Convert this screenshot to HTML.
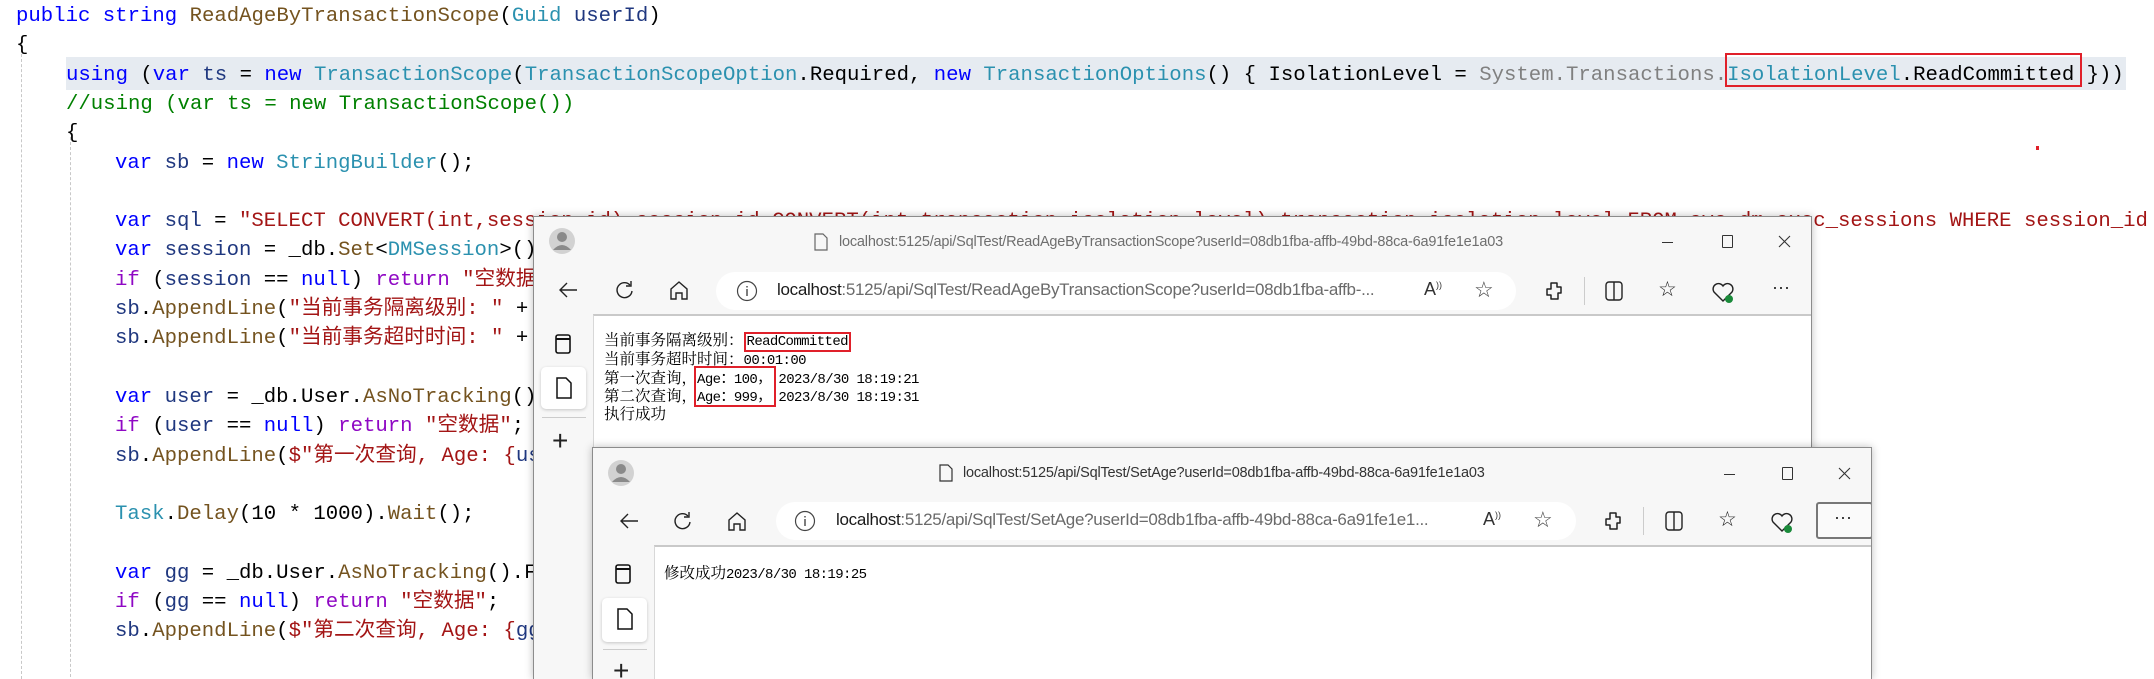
<!DOCTYPE html>
<html><head><meta charset="utf-8"><style>
*{margin:0;padding:0;box-sizing:border-box}
html,body{width:2154px;height:679px;overflow:hidden;background:#fff;position:relative}
.code{position:absolute;left:0;top:0;font-family:"Liberation Mono","Noto Sans CJK SC",monospace;font-size:20.66px;color:#000;white-space:pre}
.ln{position:absolute;height:29.3px;line-height:29.3px}
.k{color:#0000ff}.t{color:#2b91af}.s{color:#a31515}.c{color:#008000}.m{color:#74531f}.g{color:#808080}.v{color:#1f377f}.p{color:#8f08c4}
.guide{position:absolute;width:0;border-left:1px dashed #c8c8c8}
.win{position:absolute;background:#f7f7f7;border:1px solid #8c8c8c;border-bottom:none;box-shadow:0 0 8px rgba(0,0,0,.25);overflow:hidden;font-family:"Liberation Sans",sans-serif}
.abs{position:absolute}
.title{position:absolute;font-size:14.5px;color:#6e6e6e;white-space:nowrap;letter-spacing:-0.2px}
.pill{position:absolute;background:#fff;border-radius:20px}
.url{position:absolute;font-size:17px;color:#6a6a6a;white-space:nowrap;letter-spacing:-0.3px}
.url b{font-weight:normal;color:#1a1a1a}
.content{position:absolute;background:#fff;border-top:2px solid #c9c9c9;border-left:1px solid #d8d8d8}
.txt{position:absolute;font-family:"Noto Serif CJK SC","Noto Sans CJK SC",serif;font-size:15.5px;white-space:nowrap;color:#000;line-height:18.5px}
.a{font-family:"Liberation Mono",monospace;font-size:14px;letter-spacing:-0.6px}
.rb{border:2px solid #e0202a;padding:0 1px}
</style></head><body>

<div class="guide" style="left:21px;top:44px;height:640px"></div>
<div class="guide" style="left:70px;top:132px;height:560px"></div>

<div class="abs" style="left:66px;top:57px;width:2060px;height:33px;background:#e6ebf1"></div>
<div class="abs" style="left:1725px;top:53px;width:357px;height:34px;border:2px solid #e0202a"></div>
<div class="abs" style="left:2036px;top:146px;width:3px;height:4px;background:#e0202a"></div>

<div class="code">
<div class="ln" style="left:16px;top:2px"><span class="k">public</span> <span class="k">string</span> <span class="m">ReadAgeByTransactionScope</span>(<span class="t">Guid</span> <span class="v">userId</span>)</div>
<div class="ln" style="left:16px;top:31.3px">{</div>
<div class="ln" style="left:66px;top:60.6px"><span class="k">using</span> (<span class="k">var</span> <span class="v">ts</span> = <span class="k">new</span> <span class="t">TransactionScope</span>(<span class="t">TransactionScopeOption</span>.Required, <span class="k">new</span> <span class="t">TransactionOptions</span>() { IsolationLevel = <span class="g">System.Transactions.</span><span class="t">IsolationLevel</span>.ReadCommitted }))</div>
<div class="ln c" style="left:66px;top:89.9px">//using (var ts = new TransactionScope())</div>
<div class="ln" style="left:66px;top:119.2px">{</div>
<div class="ln" style="left:115px;top:148.5px"><span class="k">var</span> <span class="v">sb</span> = <span class="k">new</span> <span class="t">StringBuilder</span>();</div>
<div class="ln" style="left:115px;top:207.1px"><span class="k">var</span> <span class="v">sql</span> = <span class="s">"SELECT CONVERT(int,session_id) session_id,CONVERT(int,transaction_isolation_level) transaction_isolation_level FROM sys.dm_exec_sessions WHERE session_id</span></div>
<div class="ln" style="left:115px;top:236.4px"><span class="k">var</span> <span class="v">session</span> = _db.<span class="m">Set</span>&lt;<span class="t">DMSession</span>&gt;().FromSqlRaw(sql).FirstOrDefault();</div>
<div class="ln" style="left:115px;top:265.7px"><span class="p">if</span> (<span class="v">session</span> == <span class="k">null</span>) <span class="p">return</span> <span class="s">"空数据";</span></div>
<div class="ln" style="left:115px;top:295px"><span class="v">sb</span>.<span class="m">AppendLine</span>(<span class="s">"当前事务隔离级别: "</span> + session);</div>
<div class="ln" style="left:115px;top:324.3px"><span class="v">sb</span>.<span class="m">AppendLine</span>(<span class="s">"当前事务超时时间: "</span> + session);</div>
<div class="ln" style="left:115px;top:382.9px"><span class="k">var</span> <span class="v">user</span> = _db.User.<span class="m">AsNoTracking</span>().FirstOrDefault();</div>
<div class="ln" style="left:115px;top:412.2px"><span class="p">if</span> (<span class="v">user</span> == <span class="k">null</span>) <span class="p">return</span> <span class="s">"空数据"</span>;</div>
<div class="ln" style="left:115px;top:441.5px"><span class="v">sb</span>.<span class="m">AppendLine</span>(<span class="s">$"第一次查询, Age: {</span><span class="v">user</span>.Age}");</div>
<div class="ln" style="left:115px;top:500.1px"><span class="t">Task</span>.<span class="m">Delay</span>(10 * 1000).<span class="m">Wait</span>();</div>
<div class="ln" style="left:115px;top:558.7px"><span class="k">var</span> <span class="v">gg</span> = _db.User.<span class="m">AsNoTracking</span>().FirstOrDefault();</div>
<div class="ln" style="left:115px;top:588px"><span class="p">if</span> (<span class="v">gg</span> == <span class="k">null</span>) <span class="p">return</span> <span class="s">"空数据"</span>;</div>
<div class="ln" style="left:115px;top:617.3px"><span class="v">sb</span>.<span class="m">AppendLine</span>(<span class="s">$"第二次查询, Age: {</span><span class="v">gg</span>.Age}");</div>
</div>

<!-- Browser 1 -->
<div class="win" style="left:533px;top:216px;width:1279px;height:463px">
  <svg class="abs" style="left:14px;top:10px" width="28" height="28"><circle cx="14" cy="14" r="13" fill="#d2d2d2"/><circle cx="14" cy="10" r="5" fill="#8a8a8a"/><path d="M5 23 q9-10 18 0" fill="#8a8a8a"/></svg>
  <svg class="abs" style="left:280px;top:16px" width="14" height="18"><path d="M1 1h8l4 4v12H1z" fill="none" stroke="#666" stroke-width="1.2"/></svg>
  <div class="title" style="left:305px;top:17px">localhost:5125/api/SqlTest/ReadAgeByTransactionScope?userId=08db1fba-affb-49bd-88ca-6a91fe1e1a03</div>
  <div class="abs" style="left:1128px;top:25px;width:11px;height:1px;background:#333"></div>
  <div class="abs" style="left:1188px;top:18px;width:11px;height:13px;border:1px solid #333;border-radius:1px"></div>
  <svg class="abs" style="left:1244px;top:18px" width="13" height="13"><path d="M1 1L12 12M12 1L1 12" stroke="#333" stroke-width="1.1"/></svg>
  <svg class="abs" style="left:24px;top:64px" width="20" height="18"><path d="M19 9H2M9 2L2 9l7 7" fill="none" stroke="#222" stroke-width="1.4"/></svg>
  <svg class="abs" style="left:81px;top:63px" width="20" height="22"><path d="M15 5A7.5 7.5 0 1 0 17 11" fill="none" stroke="#222" stroke-width="1.4"/><path d="M11 6h5V1" fill="none" stroke="#222" stroke-width="1.4"/></svg>
  <svg class="abs" style="left:135px;top:63px" width="20" height="20"><path d="M2 9L10 2l8 7v10h-5v-6H7v6H2z" fill="none" stroke="#222" stroke-width="1.4"/></svg>
  <div class="pill" style="left:182px;top:55px;width:800px;height:38px"></div>
  <svg class="abs" style="left:202px;top:63px" width="22" height="22"><circle cx="11" cy="11" r="9.5" fill="none" stroke="#444" stroke-width="1.2"/><path d="M11 9v7M11 6v1.5" stroke="#444" stroke-width="1.4"/></svg>
  <div class="url" style="left:243px;top:63px"><b>localhost</b>:5125/api/SqlTest/ReadAgeByTransactionScope?userId=08db1fba-affb-...</div>
  <div class="abs" style="left:890px;top:62px;font-size:18px;color:#333">A<sup style="font-size:9px">))</sup></div>
  <div class="abs" style="left:940px;top:60px;font-size:22px;color:#444">☆</div>
  <svg class="abs" style="left:1009px;top:63px" width="22" height="22"><path d="M8 3h6v4h4v6h-3v6H8v-4H4V9h4z" fill="none" stroke="#222" stroke-width="1.5" stroke-linejoin="round"/></svg>
  <div class="abs" style="left:1050px;top:60px;width:1px;height:28px;background:#ccc"></div>
  <svg class="abs" style="left:1070px;top:63px" width="20" height="22"><rect x="2" y="2" width="16" height="18" rx="3" fill="none" stroke="#222" stroke-width="1.4"/><path d="M10 2v18" stroke="#222" stroke-width="1.4"/></svg>
  <div class="abs" style="left:1124px;top:60px;font-size:21px;color:#222">☆</div>
  <svg class="abs" style="left:1177px;top:63px" width="24" height="24"><path d="M12 21L3 12a5 5 0 0 1 9-6a5 5 0 0 1 9 6z" fill="none" stroke="#222" stroke-width="1.4"/><circle cx="18" cy="19" r="4" fill="#1a8a3a"/></svg>
  <div class="abs" style="left:1238px;top:60px;font-size:18px;color:#222">···</div>
  <div class="content" style="left:59px;top:97px;width:1230px;height:380px"></div>
  <svg class="abs" style="left:20px;top:116px" width="18" height="22"><rect x="2" y="2" width="14" height="18" rx="2" fill="none" stroke="#111" stroke-width="1.6"/><path d="M2 6h14" stroke="#111" stroke-width="2"/></svg>
  <div class="abs" style="left:7px;top:150px;width:45px;height:42px;background:#fff;border-radius:5px;box-shadow:0 1px 3px rgba(0,0,0,.2)"></div>
  <svg class="abs" style="left:22px;top:160px" width="16" height="22"><path d="M1 1h9l5 5v15H1z" fill="none" stroke="#111" stroke-width="1.5"/></svg>
  <div class="abs" style="left:8px;top:200px;width:44px;height:1px;background:#ccc"></div>
  <div class="abs" style="left:18px;top:208px;font-size:28px;color:#222;font-weight:300">+</div>
  <div class="txt" style="left:70px;top:113px">当前事务隔离级别：<span class="a rb">ReadCommitted</span></div>
  <div class="txt" style="left:70px;top:132px">当前事务超时时间：<span class="a">00:01:00</span></div>
  <div class="txt" style="left:70px;top:151px">第一次查询，<span class="a">Age：100，</span><span class="a"> 2023/8/30 18:19:21</span></div>
  <div class="txt" style="left:70px;top:169px">第二次查询，<span class="a">Age：999，</span><span class="a"> 2023/8/30 18:19:31</span></div>
  <div class="txt" style="left:70px;top:187px">执行成功</div>
  <div class="abs" style="left:160px;top:149px;width:82px;height:41px;border:2px solid #e0202a"></div>
</div>

<!-- Browser 2 -->
<div class="win" style="left:592px;top:447px;width:1280px;height:232px">
  <svg class="abs" style="left:14px;top:11px" width="28" height="28"><circle cx="14" cy="14" r="13" fill="#d2d2d2"/><circle cx="14" cy="10" r="5" fill="#8a8a8a"/><path d="M5 23 q9-10 18 0" fill="#8a8a8a"/></svg>
  <svg class="abs" style="left:346px;top:16px" width="14" height="18"><path d="M1 1h8l4 4v12H1z" fill="none" stroke="#333" stroke-width="1.2"/></svg>
  <div class="title" style="left:370px;top:17px;color:#333">localhost:5125/api/SqlTest/SetAge?userId=08db1fba-affb-49bd-88ca-6a91fe1e1a03</div>
  <div class="abs" style="left:1131px;top:26px;width:11px;height:1px;background:#333"></div>
  <div class="abs" style="left:1189px;top:19px;width:11px;height:13px;border:1px solid #333;border-radius:1px"></div>
  <svg class="abs" style="left:1245px;top:19px" width="13" height="13"><path d="M1 1L12 12M12 1L1 12" stroke="#333" stroke-width="1.1"/></svg>
  <svg class="abs" style="left:26px;top:64px" width="20" height="18"><path d="M19 9H2M9 2L2 9l7 7" fill="none" stroke="#222" stroke-width="1.4"/></svg>
  <svg class="abs" style="left:80px;top:63px" width="20" height="22"><path d="M15 5A7.5 7.5 0 1 0 17 11" fill="none" stroke="#222" stroke-width="1.4"/><path d="M11 6h5V1" fill="none" stroke="#222" stroke-width="1.4"/></svg>
  <svg class="abs" style="left:134px;top:63px" width="20" height="20"><path d="M2 9L10 2l8 7v10h-5v-6H7v6H2z" fill="none" stroke="#222" stroke-width="1.4"/></svg>
  <div class="pill" style="left:183px;top:54px;width:800px;height:38px"></div>
  <svg class="abs" style="left:201px;top:62px" width="22" height="22"><circle cx="11" cy="11" r="9.5" fill="none" stroke="#444" stroke-width="1.2"/><path d="M11 9v7M11 6v1.5" stroke="#444" stroke-width="1.4"/></svg>
  <div class="url" style="left:243px;top:62px"><b>localhost</b>:5125/api/SqlTest/SetAge?userId=08db1fba-affb-49bd-88ca-6a91fe1e1...</div>
  <div class="abs" style="left:890px;top:61px;font-size:18px;color:#333">A<sup style="font-size:9px">))</sup></div>
  <div class="abs" style="left:940px;top:59px;font-size:22px;color:#444">☆</div>
  <svg class="abs" style="left:1009px;top:62px" width="22" height="22"><path d="M8 3h6v4h4v6h-3v6H8v-4H4V9h4z" fill="none" stroke="#222" stroke-width="1.5" stroke-linejoin="round"/></svg>
  <div class="abs" style="left:1050px;top:59px;width:1px;height:28px;background:#ccc"></div>
  <svg class="abs" style="left:1071px;top:62px" width="20" height="22"><rect x="2" y="2" width="16" height="18" rx="3" fill="none" stroke="#222" stroke-width="1.4"/><path d="M10 2v18" stroke="#222" stroke-width="1.4"/></svg>
  <div class="abs" style="left:1125px;top:59px;font-size:21px;color:#222">☆</div>
  <svg class="abs" style="left:1177px;top:62px" width="24" height="24"><path d="M12 21L3 12a5 5 0 0 1 9-6a5 5 0 0 1 9 6z" fill="none" stroke="#222" stroke-width="1.4"/><circle cx="18" cy="19" r="4" fill="#1a8a3a"/></svg>
  <div class="abs" style="left:1223px;top:54px;width:57px;height:37px;border:2px solid #777;border-radius:3px;background:#fafafa"></div>
  <div class="abs" style="left:1241px;top:59px;font-size:18px;color:#222">···</div>
  <div class="content" style="left:61px;top:97px;width:1230px;height:140px"></div>
  <svg class="abs" style="left:21px;top:115px" width="18" height="22"><rect x="2" y="2" width="14" height="18" rx="2" fill="none" stroke="#111" stroke-width="1.6"/><path d="M2 6h14" stroke="#111" stroke-width="2"/></svg>
  <div class="abs" style="left:9px;top:150px;width:45px;height:44px;background:#fff;border-radius:5px;box-shadow:0 1px 3px rgba(0,0,0,.2)"></div>
  <svg class="abs" style="left:24px;top:160px" width="16" height="22"><path d="M1 1h9l5 5v15H1z" fill="none" stroke="#111" stroke-width="1.5"/></svg>
  <div class="abs" style="left:10px;top:201px;width:44px;height:1px;background:#ccc"></div>
  <div class="abs" style="left:20px;top:207px;font-size:28px;color:#222;font-weight:300">+</div>
  <div class="txt" style="left:71px;top:115px">修改成功<span class="a">2023/8/30 18:19:25</span></div>
</div>

</body></html>
